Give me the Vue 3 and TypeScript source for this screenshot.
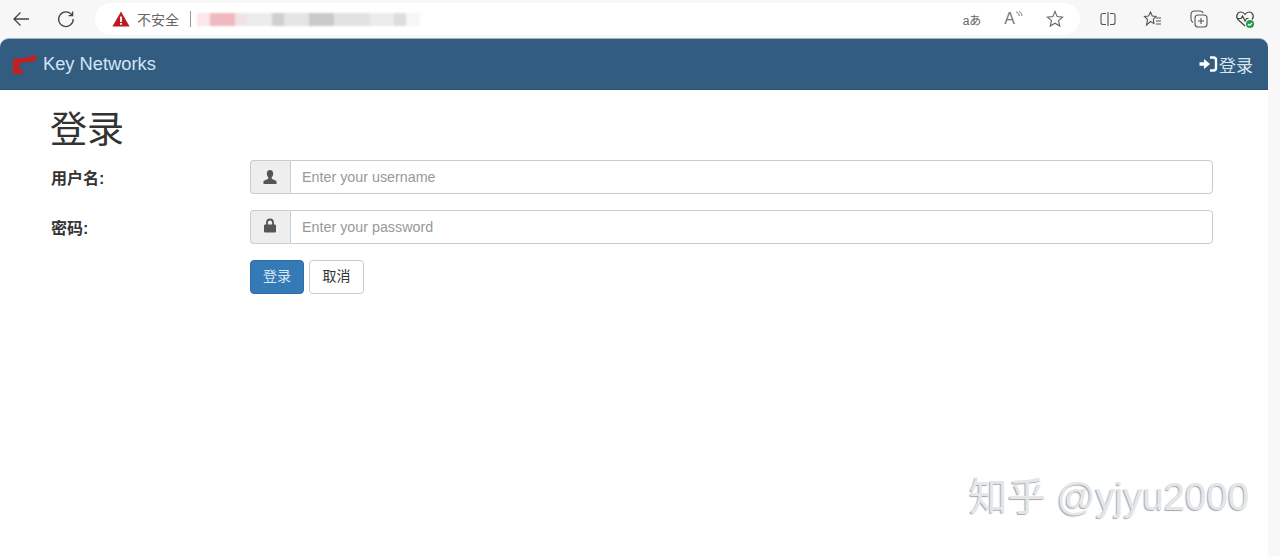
<script setup lang="ts">
const urlBlocks = [
  { w: 13, c: '#fbe6e8' },
  { w: 25, c: '#efb9bf' },
  { w: 12, c: '#f1e2e3' },
  { w: 25, c: '#ececec' },
  { w: 12, c: '#cfcfcf' },
  { w: 25, c: '#e4e4e4' },
  { w: 25, c: '#c9c9c9' },
  { w: 36, c: '#e2e2e2' },
  { w: 24, c: '#ececec' },
  { w: 12, c: '#dddddd' },
  { w: 14, c: '#f6f6f6' },
]
</script>

<template>
  <div class="page">
    <div class="toolbar">
      <svg class="tb-icon back" width="20" height="20" viewBox="0 0 20 20">
        <path d="M18 10H3M9.5 3.5 3 10l6.5 6.5" />
      </svg>
      <svg class="tb-icon reload" width="20" height="20" viewBox="0 0 20 20">
        <path d="M16 6.2A7.3 7.3 0 1 0 17.2 10M16.6 2.600v4h-4" />
      </svg>
      <div class="address">
        <svg class="warn" width="18" height="16" viewBox="0 0 18 16">
          <path d="M9 0.500 17.600 15.500H0.400Z" fill="#bb1c22" />
          <rect x="8.100" y="5.500" width="1.800" height="5.500" fill="#fff" />
          <rect x="8.100" y="12" width="1.800" height="1.800" fill="#fff" />
        </svg>
        <span class="insecure">不安全</span>
        <span class="divider"></span>
        <div class="url">
          <span
            v-for="(b, i) in urlBlocks"
            :key="i"
            :style="{ width: b.w + 'px', background: b.c }"
          ></span>
        </div>
        <div class="addr-right">
          <span class="translate">aあ</span>
          <span class="read">A<svg width="8" height="9" viewBox="0 0 8 9"><path d="M1 1c2 .6 3 2 3.400 4M4 .5c1.800.8 2.800 2.400 3 4.500" /></svg></span>
          <svg class="tb-icon star" width="18" height="18" viewBox="0 0 18 18">
            <path d="M9 1.500 11.200 6.600 16.600 7.100 12.500 10.700 13.800 16 9 13.200 4.200 16 5.500 10.700 1.400 7.100 6.800 6.600Z" />
          </svg>
        </div>
      </div>
      <div class="tb-right">
        <svg class="tb-icon" width="18" height="18" viewBox="0 0 18 18">
          <path d="M9 2v14M7 3.500H4a2 2 0 0 0-2 2v7a2 2 0 0 0 2 2h3M11 3.500h3a2 2 0 0 1 2 2v7a2 2 0 0 1-2 2h-3" />
        </svg>
        <svg class="tb-icon" width="20" height="18" viewBox="0 0 20 18">
          <path d="M7.500 2 9.300 6 13 6.400 10.300 9.100 11 13.500 7.500 11.500 3.500 15 4.500 9.500 1.500 6.500 5.600 6Z" />
          <path d="M13 8h5M13 11h5M13 14h5" />
        </svg>
        <svg class="tb-icon" width="20" height="20" viewBox="0 0 20 20">
          <path d="M4 13.500C2.500 12.500 2 11.500 2 10V5.500C2 3.500 3.500 2 5.500 2H11c1.500 0 2.500.6 3.200 2" />
          <rect x="6" y="6" width="12" height="12" rx="3" />
          <path d="M12 9v6M9 12h6" />
        </svg>
        <svg class="health" width="20" height="20" viewBox="0 0 20 20">
          <path class="heart" d="M10 17 3 10.500C.5 8 2 3 6 3c2 0 3 1 4 2.500C11 4 12 3 14 3c4 0 5.500 5 3 7.500" />
          <path class="heart" d="M2.500 9.500h3.500l1.500-2.500 2.500 5 1.500-2.500h2" />
          <circle cx="15" cy="15" r="4" fill="#1f9d4d" />
          <path d="M13 15l1.500 1.500L17 14" fill="none" stroke="#fff" stroke-width="1.200" />
        </svg>
      </div>
    </div>

    <div class="main">
      <nav class="navbar">
        <a class="brand">
          <svg width="25" height="22" viewBox="0 0 25 22">
            <path d="M0 6 19 4v4.500L6.500 10V21H0Z" fill="#c3201f" />
            <path d="M18 1 24.500 4.500 19 10Z" fill="#c3201f" />
            <path d="M3 13 10 18v3H3Z" fill="#c3201f" />
          </svg>
          <span>Key Networks</span>
        </a>
        <a class="nav-login">
          <svg width="19" height="16" viewBox="0 0 19 16">
            <path d="M0.500 6.300H5V3l6 5-6 5V9.700H0.500Z" fill="#fff" />
            <path d="M11 1.500h3.500c1.500 0 2.500 1 2.500 2.500v8c0 1.500-1 2.500-2.500 2.500H11" fill="none" stroke="#fff" stroke-width="2.400" />
          </svg>
          <span>登录</span>
        </a>
      </nav>

      <div class="content">
        <h1>登录</h1>
        <form class="form" @submit.prevent>
          <div class="row">
            <label for="username">用户名:</label>
            <div class="input-group">
              <span class="addon">
                <svg width="14" height="14" viewBox="0 0 14 14">
                  <path d="M7 0C4.800 0 3.800 1.600 3.800 3.500c0 1.500.6 3 1.500 3.900v1.300L.5 11v3h13v-3L8.700 8.700V7.400c.9-.9 1.500-2.400 1.500-3.900C10.200 1.600 9.200 0 7 0Z" fill="#555" />
                </svg>
              </span>
              <input id="username" type="text" placeholder="Enter your username" />
            </div>
          </div>
          <div class="row">
            <label for="password">密码:</label>
            <div class="input-group">
              <span class="addon">
                <svg class="lock" width="14" height="15" viewBox="0 0 14 15">
                  <path d="M4 7V4.500a3 3 0 0 1 6 0V7" fill="none" stroke="#555" stroke-width="1.800" />
                  <rect x="1" y="6.500" width="12" height="8" rx="1.200" fill="#555" />
                </svg>
              </span>
              <input id="password" type="password" placeholder="Enter your password" />
            </div>
          </div>
          <div class="row">
            <span></span>
            <div class="actions">
              <button class="btn primary" type="submit">登录</button>
              <button class="btn" type="button">取消</button>
            </div>
          </div>
        </form>
      </div>
    </div>

    <div class="watermark">知乎 @yjyu2000</div>
  </div>
</template>

<style>
body {
  background: #fff;
}
</style>

<style scoped>
.page {
  position: relative;
  width: 1280px;
  height: 556px;
  overflow: hidden;
  display: flex;
  flex-direction: column;
  background: #f8f8f8;
  font-family: "Liberation Sans", "Noto Sans CJK SC", sans-serif;
  color: #333;
}

.toolbar {
  height: 38px;
  flex: none;
  display: flex;
  align-items: center;
  padding-left: 11px;
  background: #f7f7f7;
}

.tb-icon path,
.tb-icon rect {
  fill: none;
  stroke: #555;
  stroke-width: 1.1;
}

.back path,
.reload path {
  stroke: #444;
  stroke-width: 1.3;
}

.reload {
  margin-left: 25px;
}

.address {
  width: 985px;
  height: 32px;
  margin-left: 19px;
  padding: 0 16px 0 17px;
  box-sizing: border-box;
  display: flex;
  align-items: center;
  background: #fff;
  border-radius: 16px;
}

.warn {
  flex: none;
}

.insecure {
  margin-left: 7px;
  font-size: 14px;
  color: #666;
}

.divider {
  width: 1px;
  height: 16px;
  margin: 0 6px 0 11px;
  background: #999;
}

.url {
  display: flex;
  height: 13px;
  filter: blur(1px);
}

.addr-right {
  margin-left: auto;
  display: flex;
  align-items: center;
  gap: 23px;
}

.translate {
  font-size: 12px;
  color: #666;
}

.read {
  display: flex;
  font-size: 16px;
  color: #777;
}

.read svg {
  margin-top: 1px;
}

.read path {
  fill: none;
  stroke: #777;
}

.star path {
  stroke: #666;
}

.tb-right {
  flex: 1;
  display: flex;
  align-items: center;
  gap: 26px;
  padding-left: 19px;
}

.heart {
  fill: none;
  stroke: #444;
  stroke-width: 1.2;
}

.main {
  width: 1268px;
  flex: 1;
  background: #fff;
  border-radius: 9px 9px 0 0;
}

.navbar {
  height: 52px;
  box-sizing: border-box;
  padding: 0 15px 0 13px;
  display: flex;
  align-items: center;
  justify-content: space-between;
  background: #325c80;
  border-radius: 9px 9px 0 0;
  border-top: 1px solid #9fb2c3;
  border-bottom: 1px solid #2c4f6f;
}

.brand,
.nav-login {
  display: flex;
  align-items: center;
}

.brand {
  gap: 5px;
  font-size: 18.3px;
  color: #d3e4f5;
}

.nav-login {
  gap: 1px;
  font-size: 17px;
  color: #d8e4ef;
}

.content {
  padding: 0 55px 0 50px;
}

h1 {
  margin: 16px 0 0;
  font-size: 37px;
  font-weight: 400;
  line-height: 50px;
}

.form {
  margin-top: 4px;
  display: flex;
  flex-direction: column;
  gap: 16px;
}

.row {
  display: grid;
  grid-template-columns: 200px 1fr;
  align-items: center;
}

label {
  padding-left: 1px;
  font-size: 16px;
  font-weight: 700;
}

.input-group {
  display: flex;
  height: 34px;
}

.addon {
  width: 37px;
  padding-right: 2px;
  flex: none;
  display: flex;
  align-items: center;
  justify-content: center;
  background: #eee;
  border: 1px solid #ccc;
  border-right: 0;
  border-radius: 4px 0 0 4px;
}

.lock {
  margin-top: -4px;
}

input {
  flex: 1;
  min-width: 0;
  padding: 0 11px;
  font: 14.3px "Liberation Sans", sans-serif;
  color: #555;
  background: #fff;
  border: 1px solid #ccc;
  border-radius: 0 4px 4px 0;
  outline: none;
}

input::placeholder {
  color: #999;
  opacity: 1;
}

.actions {
  display: flex;
  gap: 5px;
}

.btn {
  width: 55px;
  height: 34px;
  padding: 0 0 5px;
  font: 14px "Liberation Sans", "Noto Sans CJK SC", sans-serif;
  color: #333;
  background: #fff;
  border: 1px solid #ccc;
  border-radius: 4px;
}

.primary {
  width: 54px;
  color: #dbe9f5;
  background: #337ab7;
  border-color: #2e6da4;
}

.watermark {
  position: absolute;
  top: 474px;
  left: 969px;
  font-size: 38.4px;
  line-height: 46px;
  white-space: nowrap;
  color: #e6e6e6;
  text-shadow: -1px 1px 1px #a8a8a8;
}
</style>
